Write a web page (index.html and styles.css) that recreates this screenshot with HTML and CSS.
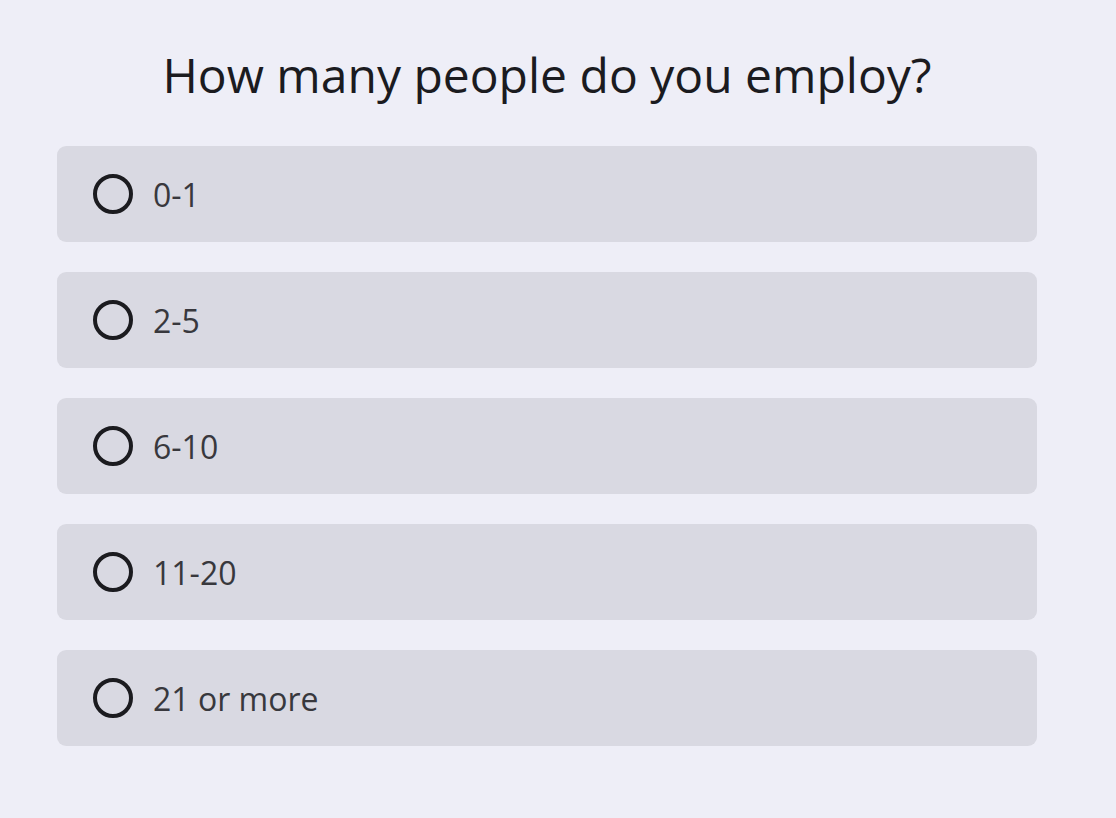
FILE: index.html
```html
<!DOCTYPE html>
<html lang="en">
<head>
    <meta charset="UTF-8">
    <meta name="viewport" content="width=device-width, initial-scale=1.0">
    <title>Employees</title>
    <link rel="stylesheet" href="styles.css">
</head>
<body>
    <div class="survey">
        <h1 class="question">How many people do you employ?</h1>
        <div class="options">
            <label class="option"><span class="radio"></span><span class="option-text">0-1</span></label>
            <label class="option"><span class="radio"></span><span class="option-text">2-5</span></label>
            <label class="option"><span class="radio"></span><span class="option-text">6-10</span></label>
            <label class="option"><span class="radio"></span><span class="option-text">11-20</span></label>
            <label class="option"><span class="radio"></span><span class="option-text">21 or more</span></label>
        </div>
    </div>
</body>
</html>
```

FILE: styles.css
```css
html, body {
    margin: 0;
    background-color: #eeeef7;
    font-family: 'Open Sans', sans-serif;
}
.survey {
    width: 980px;
    margin-left: 57px;
    padding-top: 44px;
}
.question {
    margin: 0 0 40px 0;
    text-align: center;
    font-size: 48px;
    font-weight: 400;
    line-height: 62px;
    color: #1b1b1f;
}
.options {
    display: flex;
    flex-direction: column;
    gap: 30px;
}
.option {
    display: flex;
    align-items: center;
    height: 96px;
    padding-left: 36px;
    box-sizing: border-box;
    background-color: #d9d9e2;
    border-radius: 9px;
    cursor: pointer;
}
.radio {
    width: 40px;
    height: 40px;
    box-sizing: border-box;
    border: 4px solid #1b1b1f;
    border-radius: 50%;
    margin-right: 20px;
}
.option-text {
    font-size: 32px;
    color: #38383d;
}
```
